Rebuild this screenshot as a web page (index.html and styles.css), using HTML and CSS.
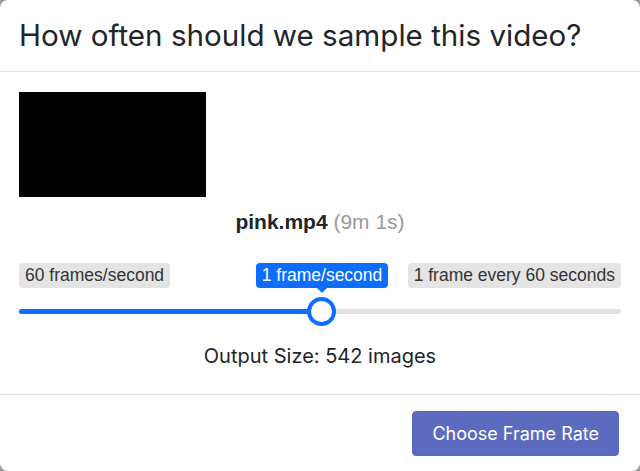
FILE: index.html
```html
<!DOCTYPE html>
<html lang="en">
<head>
    <meta charset="UTF-8">
    <meta name="viewport" content="width=device-width, initial-scale=1.0">
    <title>Sample Video</title>
    <link rel="stylesheet" href="styles.css">
</head>
<body>
    <div class="modal">
        <header class="modal-header">
            <h1>How often should we sample this video?</h1>
        </header>

        <main class="modal-body">
            <div class="video-preview"></div>

            <p class="file-name">pink.mp4 <span class="duration">(9m 1s)</span></p>

            <!-- frame rate slider -->
            <div class="rate-labels">
                <span class="rate-label">60 frames/second</span>
                <span class="rate-label current">1 frame/second</span>
                <span class="rate-label end">1 frame every 60 seconds</span>
            </div>
            <div class="slider">
                <div class="slider-fill" style="width: 50.3%"></div>
                <div class="slider-thumb" style="left: 50.3%"></div>
            </div>

            <p class="output-size">Output Size: 542 images</p>
        </main>

        <footer class="modal-footer">
            <button type="button">Choose Frame Rate</button>
        </footer>
    </div>
</body>
</html>
```

FILE: styles.css
```css
body {
    margin: 0;
    padding: 0;
    background-color: #9a9a9a;
    font-family: Inter, "Liberation Sans", sans-serif;
    color: #212529;
}

.modal {
    height: 471px;
    background-color: #ffffff;
    border-radius: 8px;
    display: flex;
    flex-direction: column;
    overflow: hidden;
}

.modal-header {
    height: 72px;
    padding: 0 19px;
    border-bottom: 1px solid #dee2e6;
    display: flex;
    align-items: center;
    box-sizing: border-box;
}

h1 {
    margin: 0;
    font-size: 29.6px;
    font-weight: 400;
    line-height: 1.2;
    color: #212529;
}

.modal-body {
    flex: 1;
    padding: 20px 19px 0;
}

.video-preview {
    width: 187px;
    height: 105px;
    background-color: #000000;
}

.file-name {
    margin: 12px 0 0;
    text-align: center;
    font-family: "Liberation Sans", Arial, sans-serif;
    font-size: 21px;
    font-weight: 700;
    line-height: 26px;
    color: #212529;
}

.duration {
    font-weight: 400;
    color: #9a9a9a;
}

.rate-labels {
    margin-top: 28px;
    display: grid;
    grid-template-columns: 1fr auto 1fr;
    align-items: center;
}

.rate-label {
    justify-self: start;
    padding: 0 6px;
    height: 25px;
    line-height: 25px;
    border-radius: 4px;
    background-color: #e4e4e4;
    font-family: "Liberation Sans", Arial, sans-serif;
    font-size: 17.5px;
    color: #333333;
    white-space: nowrap;
}

.rate-label.current {
    position: relative;
    left: 2px;
    background-color: #0d6efd;
    color: #ffffff;
}

.rate-label.current::after {
    content: "";
    position: absolute;
    left: 50%;
    bottom: -5px;
    margin-left: -5px;
    border-left: 5px solid transparent;
    border-right: 5px solid transparent;
    border-top: 5px solid #0d6efd;
}

.rate-label.end {
    justify-self: end;
}

.slider {
    position: relative;
    margin-top: 21px;
    height: 5px;
    border-radius: 3px;
    background-color: #dee2e6;
}

.slider-fill {
    height: 100%;
    border-radius: 3px;
    background-color: #0d6efd;
}

.slider-thumb {
    position: absolute;
    top: 50%;
    width: 21px;
    height: 21px;
    margin: -15px 0 0 -15px;
    border: 4.5px solid #0d6efd;
    border-radius: 50%;
    background-color: #ffffff;
}

.output-size {
    margin: 30px 0 0;
    text-align: center;
    font-size: 20px;
    line-height: 24px;
    color: #212529;
}

.modal-footer {
    padding: 16px 21px 15px;
    border-top: 1px solid #dee2e6;
    display: flex;
    justify-content: flex-end;
}

button {
    height: 45px;
    padding: 0 19px;
    border: 1px solid #5867bd;
    border-radius: 4px;
    background-color: #5c6bc0;
    color: #ffffff;
    font-family: Inter, sans-serif;
    font-size: 18px;
    cursor: pointer;
}
```
